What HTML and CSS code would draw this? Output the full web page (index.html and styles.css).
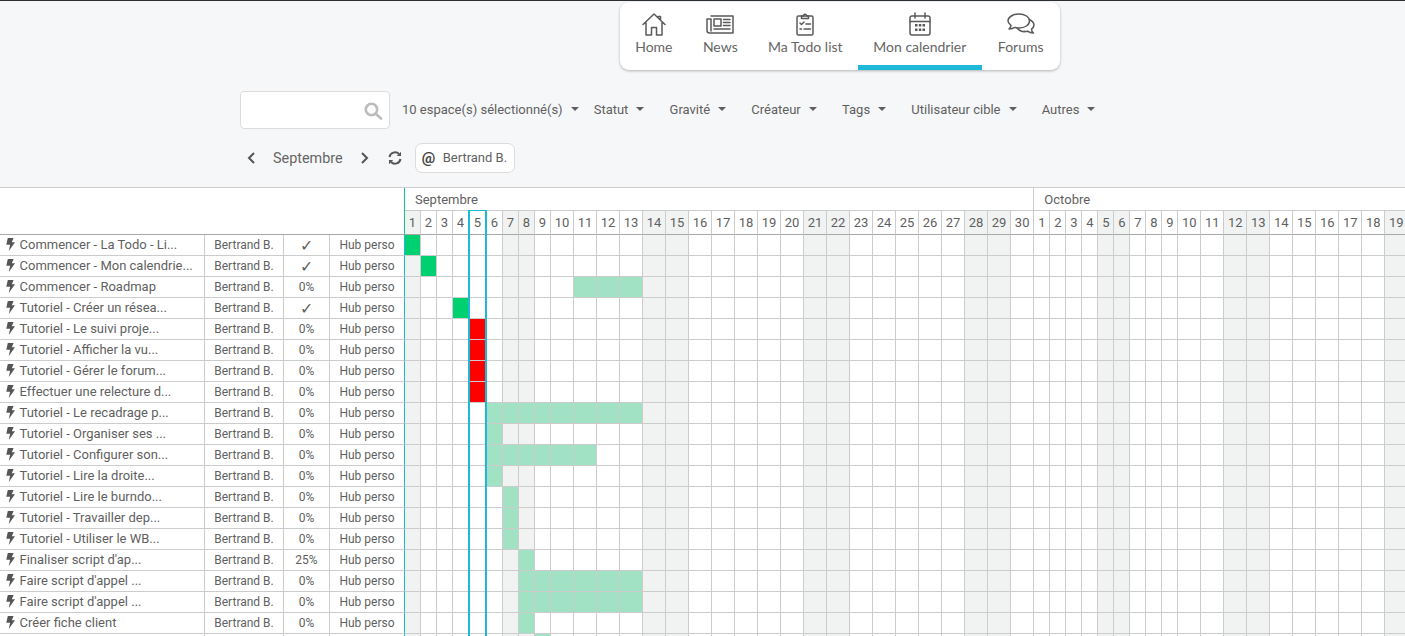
FILE: index.html
```html
<!DOCTYPE html>
<html lang="fr">
<head>
<meta charset="utf-8">
<title>Mon calendrier</title>
<link rel="stylesheet" href="styles.css">
</head>
<body>
<header class="nav-wrap">
  <nav class="nav">
    <a class="nav-item">
      <span class="nav-icon"><svg width="24" height="23" viewBox="0 0 24 23"><path d="M1 11.5 12 1l11 10.5M18.500 7V3.500h-2.500M4 9.500V22h5.500v-7.500h5V22H20V9.500"/></svg></span>
      <span>Home</span>
    </a>
    <a class="nav-item">
      <span class="nav-icon"><svg width="28" height="19" viewBox="0 0 28 19"><path d="M5 1h22v17H3.500C2 18 1 17 1 15.500V4h4v12"/><path d="M8 4h7v7H8zM17.500 4.500H24M17.500 7.500H24M17.500 10.500H24M8 14h16"/></svg></span>
      <span>News</span>
    </a>
    <a class="nav-item">
      <span class="nav-icon"><svg width="18" height="24" viewBox="0 0 18 24"><rect x="1" y="4" width="16" height="19" rx="1.500"/><path d="M5.500 6.500V4H7.500C7.500 1.500 10.500 1.500 10.500 4H12.500V6.500ZM4 11l1.500 1.500L8 10M10 12h4.500M4 17h1.500M8 17h6.500"/></svg></span>
      <span>Ma Todo list</span>
    </a>
    <a class="nav-item nav-item-active">
      <span class="nav-icon"><svg width="22" height="24" viewBox="0 0 22 24"><rect x="1" y="4" width="20" height="19" rx="2"/><path d="M1 9.500h20M6 1v5M16 1v5"/><path class="nav-dots" d="M6 12h2.500v2.500H6zM9.800 12h2.500v2.500H9.800zM13.500 12H16v2.500h-2.500zM6 16.500h2.500V19H6zM9.800 16.500h2.500V19H9.800zM13.500 16.500H16V19h-2.500z"/></svg></span>
      <span>Mon calendrier</span>
    </a>
    <a class="nav-item nav-item-last">
      <span class="nav-icon"><svg width="28" height="22" viewBox="0 0 28 22"><path d="M12 1c6 0 10.500 3 10.500 7s-4.500 7-10.500 7c-1.500 0-3-.2-4-.6-1.500 1-3.500 1.600-6 1.600 1-1 2-2 2-3.500C2.500 11 1 9.700 1 8c0-4 5-7 11-7Z"/><path d="M22.200 6.500C25 7.800 27 9.800 27 12c0 1.700-1 3-2.500 4 0 1.500.7 3 2 4-2.500 0-4.500-.7-6-1.800-3.500.9-8-.2-10.500-3.200"/></svg></span>
      <span>Forums</span>
    </a>
  </nav>
</header>

<section class="filters">
  <label class="search">
    <input class="search-input" type="text" aria-label="Recherche">
    <svg class="search-icon" width="19" height="18" viewBox="0 0 19 18"><circle cx="7.500" cy="7.500" r="5.700"/><path d="m12 12 5 4.500"/></svg>
  </label>
  <button class="filter filter-first">10 espace(s) sélectionné(s)<i class="caret"></i></button>
  <button class="filter">Statut<i class="caret"></i></button>
  <button class="filter">Gravité<i class="caret"></i></button>
  <button class="filter">Créateur<i class="caret"></i></button>
  <button class="filter">Tags<i class="caret"></i></button>
  <button class="filter">Utilisateur cible<i class="caret"></i></button>
  <button class="filter">Autres<i class="caret"></i></button>
</section>

<section class="period">
  <svg class="chev" width="9" height="12" viewBox="0 0 9 12"><path d="M7 1 2 6l5 5"/></svg>
  <span class="period-label">Septembre</span>
  <svg class="chev" width="9" height="12" viewBox="0 0 9 12"><path d="m2 1 5 5-5 5"/></svg>
  <svg class="refresh" width="14" height="14" viewBox="0 0 14 14"><path d="M1.500 6A5.600 5.600 0 0 1 11 3M12.500 8A5.600 5.600 0 0 1 3 11"/><path class="refresh-tip" d="M13 .8V5H8.800ZM1 13.200V9h4.200Z"/></svg>
  <span class="chip"><b class="chip-at">@</b><span class="chip-name">Bertrand B.</span></span>
</section>

<main class="gantt">
  <table class="gantt-table" id="gantt-table"></table>
  <div class="today" aria-hidden="true"></div>
</main>

<script src="app.js"></script>
</body>
</html>
```

FILE: styles.css
```css
* { box-sizing: border-box; }

html, body { height: 100%; }

body {
  display: flex;
  flex-direction: column;
  margin: 0;
  overflow: hidden;
  background: #f6f7f8;
  border-top: 1px solid #2b2f33;
  font-family: Roboto, "Liberation Sans", sans-serif;
  font-size: 13px;
  color: #5f5f5f;
}

/* Top navigation */
.nav-wrap {
  display: flex;
  flex: none;
  padding: 1px 0 0 620px;
}

.nav {
  display: flex;
  height: 68px;
  background: #fff;
  border-radius: 9px;
  box-shadow: 0 1px 3px rgba(0, 0, 0, .28);
  overflow: hidden;
}

.nav-item {
  display: flex;
  flex-direction: column;
  align-items: center;
  padding: 10px 15.200px 0;
  font-family: Lato, sans-serif;
  font-size: 14px;
  color: #666;
  white-space: nowrap;
}

.nav-item-active {
  padding: 10px 16px 0 15.500px;
  box-shadow: inset 0 -5px 0 #1eb8d8;
}

.nav-item-last {
  padding: 10px 16px 0 15.500px;
}

.nav-icon {
  display: flex;
  align-items: center;
  justify-content: center;
  height: 24px;
  margin-bottom: 2px;
}

.nav-icon svg {
  fill: none;
  stroke: #5a5a5a;
  stroke-width: 1.500;
  stroke-linejoin: round;
  stroke-linecap: round;
}

.nav-icon .nav-dots {
  fill: #5a5a5a;
  stroke: none;
}

/* Filters */
.filters {
  display: flex;
  flex: none;
  align-items: center;
  height: 38px;
  margin-top: 21px;
  padding-left: 240px;
}

.search {
  position: relative;
  display: block;
  width: 150px;
  height: 38px;
  margin-right: 12px;
}

.search-input {
  display: block;
  width: 100%;
  height: 100%;
  background: #fff;
  border: 1px solid #dcdcdc;
  border-radius: 4px;
}

.search-icon {
  position: absolute;
  top: 11px;
  right: 7px;
  fill: none;
  stroke: #bcbcbc;
  stroke-width: 2.600;
  stroke-linecap: round;
}

.filter {
  display: flex;
  align-items: center;
  margin-right: 25.200px;
  padding: 0 0 2px;
  background: none;
  border: 0;
  font: inherit;
  color: #5f5f5f;
  white-space: nowrap;
}

.filter-first {
  margin-right: 15px;
}

.caret {
  width: 0;
  height: 0;
  margin-left: 8px;
  border-top: 4.500px solid #5f5f5f;
  border-left: 4.500px solid transparent;
  border-right: 4.500px solid transparent;
}

/* Period row */
.period {
  display: flex;
  flex: none;
  align-items: center;
  height: 30px;
  margin-top: 14px;
  padding-left: 247px;
}

.chev {
  fill: none;
  stroke: #555;
  stroke-width: 2;
}

.period-label {
  margin: 0 17px 0 17px;
  font-size: 14.400px;
  color: #666;
}

.refresh {
  margin: 0 13px 0 19px;
  fill: none;
  stroke: #555;
  stroke-width: 2;
}

.refresh .refresh-tip {
  fill: #555;
  stroke: none;
}

.chip {
  display: flex;
  align-items: center;
  height: 30px;
  width: 100px;
  padding-left: 6px;
  background: #fff;
  border: 1px solid #dcdcdc;
  border-radius: 7px;
  font-size: 13px;
  color: #5f5f5f;
  white-space: nowrap;
}

.chip-at {
  width: 21px;
  font-size: 15px;
  font-weight: 700;
  color: #444;
}

.chip-name { padding-bottom: 2px; }

/* Gantt */
.gantt {
  position: relative;
  flex: 1;
  min-height: 0;
  margin-top: 14px;
  background: #fff;
  overflow: hidden;
}

.gantt-table {
  table-layout: fixed;
  width: 1408px;
  border-spacing: 0;
  border-collapse: separate;
  border-top: 1px solid #ccc;
}

.gantt-table th,
.gantt-table td {
  height: 21px;
  padding: 0;
  border-right: 1px solid #ccc;
  border-bottom: 1px solid #ccc;
  font-weight: 400;
  white-space: nowrap;
  overflow: hidden;
}

.gantt-table td { font-size: 12px; text-align: center; }

.gantt-table .corner {
  border-right: 1px solid #12c48c;
  border-bottom-color: #a8a8a8;
}

.gantt-table .month {
  height: 23px;
  padding-left: 10px;
  text-align: left;
  font-size: 13px;
}

.gantt-table .day {
  height: 24px;
  font-size: 13px;
  text-align: center;
  border-bottom-color: #a8a8a8;
}

.gantt-table .name {
  padding: 0 0 2px 6px;
  font-size: 13px;
  text-align: left;
}

.gantt-table .space { border-right-color: #1eb8d8; }

.gantt-table .check { font-size: 16px; }

.bolt {
  margin-right: 4.500px;
  vertical-align: -2px;
  fill: #555;
}

.col-name { width: 205px; }
.col-user { width: 79px; }
.col-pct { width: 46px; }
.col-space { width: 75px; }
.col-d1 { width: 16px; }
.col-d2 { width: 23px; }
.col-today { width: 18px; }

.gantt-table .weekend { background: #f1f2f2; }
.gantt-table .bar-done { background: #00d170; }
.gantt-table .bar-todo { background: #a0e2c3; }
.gantt-table .bar-late { background: #ff0000; }

.today {
  position: absolute;
  top: 23px;
  bottom: 0;
  left: 468px;
  width: 19px;
  border: 2px solid #1eb8d8;
  border-top-width: 1px;
  border-bottom: 0;
  pointer-events: none;
}
```

FILE: app.js
```js
var LATE = "bar-late", TODO = "bar-todo", DONE = "bar-done";

/* name, progress, first day index, last day index, bar class */
var TASKS = [
  ["Commencer - La Todo - Li...", "✓", 1, 1, DONE],
  ["Commencer - Mon calendrie...", "✓", 2, 2, DONE],
  ["Commencer - Roadmap", "0%", 11, 13, TODO],
  ["Tutoriel - Créer un résea...", "✓", 4, 4, DONE],
  ["Tutoriel - Le suivi proje...", "0%", 5, 5, LATE],
  ["Tutoriel - Afficher la vu...", "0%", 5, 5, LATE],
  ["Tutoriel - Gérer le forum...", "0%", 5, 5, LATE],
  ["Effectuer une relecture d...", "0%", 5, 5, LATE],
  ["Tutoriel - Le recadrage p...", "0%", 6, 13, TODO],
  ["Tutoriel - Organiser ses ...", "0%", 6, 6, TODO],
  ["Tutoriel - Configurer son...", "0%", 6, 11, TODO],
  ["Tutoriel - Lire la droite...", "0%", 6, 6, TODO],
  ["Tutoriel - Lire le burndo...", "0%", 7, 7, TODO],
  ["Tutoriel - Travailler dep...", "0%", 7, 7, TODO],
  ["Tutoriel - Utiliser le WB...", "0%", 7, 7, TODO],
  ["Finaliser script d'ap...", "25%", 8, 8, TODO],
  ["Faire script d'appel ...", "0%", 8, 13, TODO],
  ["Faire script d'appel ...", "0%", 8, 13, TODO],
  ["Créer fiche client", "0%", 8, 8, TODO],
  ["", "", 9, 9, TODO]
];

var DAYS = [];
for (var s = 1; s <= 30; s++) DAYS.push({ n: s, we: (s - 1) % 7 === 0 || (s - 1) % 7 === 6, today: s === 5 });
for (var o = 1; o <= 19; o++) DAYS.push({ n: o, we: o % 7 === 5 || o % 7 === 6, today: false });

var BOLT = '<svg class="bolt" width="9" height="13" viewBox="0 0 9 13"><path d="M1.800 0H7.600L5.800 4.300H9L2.800 13l1.300-6.300H.3Z"/></svg>';

var html = '<colgroup><col class="col-name"><col class="col-user"><col class="col-pct"><col class="col-space">';
DAYS.forEach(function (d) {
  html += '<col class="' + (d.today ? "col-today" : d.n < 10 ? "col-d1" : "col-d2") + '">';
});
html += '</colgroup><thead><tr><th class="corner" colspan="4" rowspan="2"></th>' +
  '<th class="month" colspan="30">Septembre</th><th class="month" colspan="19">Octobre</th></tr><tr>';
DAYS.forEach(function (d) {
  html += '<th class="day' + (d.we ? " weekend" : "") + '">' + d.n + "</th>";
});
html += "</tr></thead><tbody>";

TASKS.forEach(function (t) {
  var filled = t[0] !== "";
  html += '<tr><td class="name">' + (filled ? BOLT + t[0] : "") + "</td><td>" + (filled ? "Bertrand B." : "") +
    '</td><td class="' + (t[1] === "✓" ? "check" : "") + '">' + t[1] + '</td><td class="space">' + (filled ? "Hub perso" : "") + "</td>";
  DAYS.forEach(function (d, i) {
    var idx = i + 1, cls = idx >= t[2] && idx <= t[3] ? t[4] : d.we ? "weekend" : "";
    html += '<td class="' + cls + '"></td>';
  });
  html += "</tr>";
});

document.getElementById("gantt-table").innerHTML = html + "</tbody>";
```
